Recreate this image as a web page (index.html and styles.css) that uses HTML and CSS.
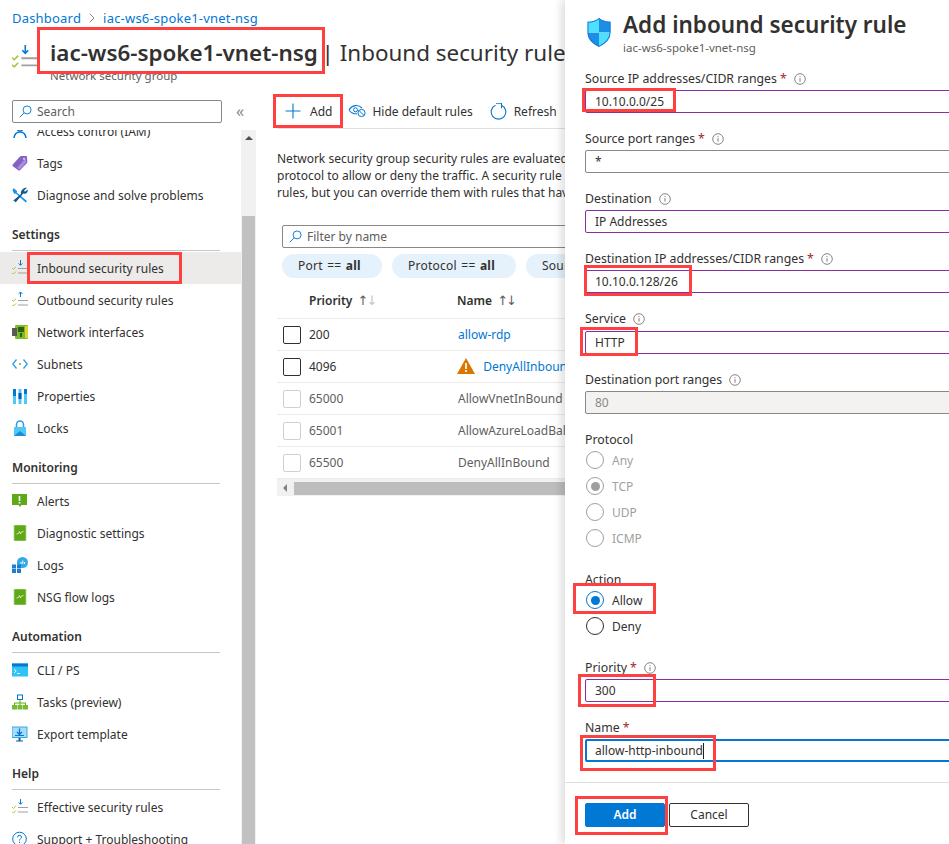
FILE: index.html
```html
<!DOCTYPE html>
<html lang="en">
<head>
    <meta charset="UTF-8">
    <meta name="viewport" content="width=device-width, initial-scale=1.0">
    <title>Add inbound security rule</title>
    <link rel="stylesheet" href="styles.css">
</head>
<body>
    <svg class="defs" width="0" height="0">
        <symbol id="rules-in" viewBox="0 0 16 16">
            <path d="M8.500 0v5M6.600 3.400l1.900 1.900 1.900-1.900" fill="none" stroke="#0078d4" stroke-width="1"/>
            <path d="M6 8.500h10M6 13h10" stroke="#a0a0a0" stroke-width="1.200"/>
            <path d="M0 8l1.400 1.400L4 6.800M0 12.600L1.400 14 4 11.400" fill="none" stroke="#a4c739" stroke-width="1"/>
        </symbol>
        <symbol id="rules-out" viewBox="0 0 16 16">
            <path d="M8.500 5V0M6.600 1.900L8.500 0l1.900 1.900" fill="none" stroke="#0078d4" stroke-width="1"/>
            <path d="M6 8.500h10M6 13h10" stroke="#a0a0a0" stroke-width="1.200"/>
            <path d="M0 8l1.400 1.400L4 6.800M0 12.600L1.400 14 4 11.400" fill="none" stroke="#a4c739" stroke-width="1"/>
        </symbol>
        <symbol id="flow" viewBox="0 0 16 16">
            <rect x="2" y="0" width="12" height="16" rx="1" fill="#5ea918"/>
            <rect x="2" y="0" width="12" height="16" rx="1" fill="none" stroke="#b4d98c" stroke-width=".8"/>
            <path d="M4.500 9l2-.5 1-2 1 2.500 1-2 2-.5" fill="none" stroke="#e8f5d8" stroke-width=".8"/>
        </symbol>
        <symbol id="info" viewBox="0 0 12 12">
            <circle cx="6" cy="6" r="5.300" fill="none" stroke="#7a7876" stroke-width=".9"/>
            <path d="M6 5.200v3.400M6 3.200v1" stroke="#7a7876" stroke-width="1"/>
        </symbol>
        <symbol id="search" viewBox="0 0 14 14">
            <circle cx="8.700" cy="5.300" r="4.300" fill="none" stroke="#0078d4" stroke-width="1"/>
            <path d="M5.600 8.400L.8 13.200" stroke="#0078d4" stroke-width="1"/>
        </symbol>
    </svg>

    <div class="page">
        <div class="blade">
            <div class="crumbs">
                <a href="#">Dashboard</a>
                <svg class="crumb-sep" width="6" height="10" viewBox="0 0 6 10"><path d="M.8.8L5 5 .8 9.200" fill="none" stroke="#8a8886"/></svg>
                <a href="#">iac-ws6-spoke1-vnet-nsg</a>
            </div>

            <div class="blade-head">
                <svg class="head-icon" width="25" height="25"><use href="#rules-in"/></svg>
                <div class="head-text">
                    <h1><b>iac-ws6-spoke1-vnet-nsg</b> | Inbound security rules</h1>
                    <p>Network security group</p>
                </div>
            </div>

            <div class="blade-body">
                <div class="side">
                    <div class="side-top">
                        <div class="search-box">
                            <svg width="13" height="13"><use href="#search"/></svg>
                            <span>Search</span>
                        </div>
                        <span class="collapse">«</span>
                    </div>
                    <div class="side-scroll">
                        <nav class="nav">
                            <a class="nav-item" href="#">
                                <svg width="16" height="16" viewBox="0 0 16 16"><circle cx="8" cy="5" r="3" fill="none" stroke="#0078d4" stroke-width="1.500"/><path d="M2 15c.5-4 3-6 6-6s5.500 2 6 6" fill="none" stroke="#0078d4" stroke-width="1.500"/></svg>
                                Access control (IAM)
                            </a>
                            <a class="nav-item" href="#">
                                <svg width="16" height="16" viewBox="0 0 16 16"><path d="M.8 9.500L8 1.500c.4-.4.800-.6 1.300-.6L14 1c.6 0 1 .4 1 1l.3 5c0 .5-.2.900-.5 1.200L8 15.200c-.5.500-1.200.5-1.700 0L.8 11.200c-.5-.5-.5-1.200 0-1.700z" fill="#8661c5"/><path d="M5 13l8.500-9.500.8 3.700L8 14.500z" fill="#a98be0"/><circle cx="12" cy="3.800" r="1" fill="#e8defa"/></svg>
                                Tags
                            </a>
                            <a class="nav-item" href="#">
                                <svg width="16" height="16" viewBox="0 0 16 16"><path d="M1.500 1l3.500 3-.3 1.500L15 14l-1.300 1.500L3.800 6.500 2.300 7 .5 3.500z" fill="#1b93eb"/><path d="M15 .8l-3 2.700 1 1.200 2.800-2.300c.3 2.800-1.800 5-4.600 4L3.800 15.300 1.300 13.600 9 7c-.8-3.500 2.800-7.200 6-6.200z" fill="#0f5c8e"/></svg>
                                Diagnose and solve problems
                            </a>

                            <h2 class="nav-head">Settings</h2>
                            <a class="nav-item active" href="#">
                                <svg width="16" height="16"><use href="#rules-in"/></svg>
                                Inbound security rules
                            </a>
                            <a class="nav-item" href="#">
                                <svg width="16" height="16"><use href="#rules-out"/></svg>
                                Outbound security rules
                            </a>
                            <a class="nav-item" href="#">
                                <svg width="16" height="16" viewBox="0 0 16 16"><rect x="3" y="1" width="13" height="14" rx="1" fill="#76bc2d"/><rect x="0" y="4" width="5" height="8" fill="#5a5a5a"/><rect x="6" y="3" width="6" height="5" fill="#2f5f12"/><rect x="8" y="9" width="2" height="4" fill="#2f5f12"/><rect x="13" y="2" width="3" height="12" fill="#e3d12c"/></svg>
                                Network interfaces
                            </a>
                            <a class="nav-item" href="#">
                                <svg width="16" height="16" viewBox="0 0 16 16"><path d="M4.500 3.500L.8 8l3.700 4.500M11.500 3.500L15.200 8l-3.700 4.500" fill="none" stroke="#2aa0f0" stroke-width="1.300"/><circle cx="8" cy="8" r="1.100" fill="#7fba00"/></svg>
                                Subnets
                            </a>
                            <a class="nav-item" href="#">
                                <svg width="16" height="16" viewBox="0 0 16 16"><rect x="1" y="1" width="3" height="15" fill="#50c8f8"/><rect x="1" y="1" width="3" height="7" fill="#0078d4"/><rect x="6.500" y="1" width="3" height="15" fill="#50c8f8"/><rect x="6.500" y="5" width="3" height="6" fill="#0b5ca8"/><rect x="12" y="1" width="3" height="15" fill="#50c8f8"/><rect x="12" y="1" width="3" height="5" fill="#0078d4"/></svg>
                                Properties
                            </a>
                            <a class="nav-item" href="#">
                                <svg width="16" height="16" viewBox="0 0 16 16"><path d="M4.500 8V4.500a3.500 3.500 0 017 0V8" fill="none" stroke="#2aa0e0" stroke-width="1.600"/><rect x="2" y="7" width="12" height="9" fill="#50c8f8"/><path d="M2 16l6-5 6 5z" fill="#1a8fd8"/></svg>
                                Locks
                            </a>

                            <h2 class="nav-head">Monitoring</h2>
                            <a class="nav-item" href="#">
                                <svg width="16" height="16" viewBox="0 0 16 16"><path d="M0 1h15v11H9.500L8 14 6.500 12H0z" fill="#5ea918"/><path d="M7.500 3v5M7.500 9v1.500" stroke="#fff" stroke-width="1.600"/></svg>
                                Alerts
                            </a>
                            <a class="nav-item" href="#">
                                <svg width="16" height="16"><use href="#flow"/></svg>
                                Diagnostic settings
                            </a>
                            <a class="nav-item" href="#">
                                <svg width="16" height="16" viewBox="0 0 16 16"><circle cx="10.500" cy="5.500" r="5.500" fill="#32a9e8"/><path d="M9 7V5M10.800 7V3.500M12.600 7V5" stroke="#fff"/><rect x="0" y="7.500" width="4" height="4" fill="#1a7fd0"/><rect x="5" y="7.500" width="4" height="4" fill="#1a7fd0"/><rect x="0" y="12" width="4" height="4" fill="#1a7fd0"/><rect x="5" y="12" width="4" height="4" fill="#1a7fd0"/></svg>
                                Logs
                            </a>
                            <a class="nav-item" href="#">
                                <svg width="16" height="16"><use href="#flow"/></svg>
                                NSG flow logs
                            </a>

                            <h2 class="nav-head">Automation</h2>
                            <a class="nav-item" href="#">
                                <svg width="16" height="16" viewBox="0 0 16 16"><rect x="0" y="1.500" width="16" height="13" fill="#32c3f5"/><rect x="0" y="1.500" width="16" height="3" fill="#0078d4"/><path d="M2 7l2.200 2L2 11M5 11.500h3" fill="none" stroke="#fff" stroke-width=".9"/></svg>
                                CLI / PS
                            </a>
                            <a class="nav-item" href="#">
                                <svg width="16" height="16" viewBox="0 0 16 16"><rect x="5.500" y="1" width="5" height="4.500" fill="#fff" stroke="#0078d4"/><path d="M8 5.500V12M2.500 12V9h11v3" fill="none" stroke="#5ea918"/><rect x="0" y="11" width="5" height="4.500" fill="#76bc2d"/><rect x="5.500" y="11" width="5" height="4.500" fill="#76bc2d"/><rect x="11" y="11" width="5" height="4.500" fill="#76bc2d"/></svg>
                                Tasks (preview)
                            </a>
                            <a class="nav-item" href="#">
                                <svg width="16" height="16" viewBox="0 0 16 16"><rect x="0" y="1" width="15" height="10.500" fill="#a8dcf8" stroke="#32a9e8"/><path d="M7.500 2.500v6M5 6l2.500 2.500L10 6" fill="none" stroke="#0078d4" stroke-width="1.300"/><path d="M3 9.500h9" stroke="#0078d4"/><path d="M6.500 12h2v2.500h2.500v1H4v-1h2.500z" fill="#0b5ca8"/></svg>
                                Export template
                            </a>

                            <h2 class="nav-head">Help</h2>
                            <a class="nav-item" href="#">
                                <svg width="16" height="16"><use href="#rules-in"/></svg>
                                Effective security rules
                            </a>
                            <a class="nav-item" href="#">
                                <svg width="16" height="16" viewBox="0 0 16 16"><circle cx="7.500" cy="8" r="6.800" fill="none" stroke="#0078d4"/><path d="M5.500 6.300a2 2 0 114 0c0 1.300-2 1.500-2 3.200M7.500 10.700v1.300" fill="none" stroke="#0078d4"/></svg>
                                Support + Troubleshooting
                            </a>
                        </nav>
                        <div class="side-bar">
                            <i class="arrow-up"></i>
                            <div class="side-thumb"></div>
                        </div>
                    </div>
                </div>

                <main class="main">
                    <div class="cmdbar">
                        <span class="cmd cmd-add">
                            <svg width="16" height="16" viewBox="0 0 16 16"><path d="M8 .5v15M.5 8h15" stroke="#0078d4" stroke-width="1.100"/></svg>
                            Add
                        </span>
                        <span class="cmd cmd-hide">
                            <svg width="18" height="14" viewBox="0 0 18 14"><path d="M1 6c3-5 9-6 13-2M1 6c2 3 5 4 8 4" fill="none" stroke="#0078d4" stroke-width="1.100"/><circle cx="7.500" cy="5.800" r="2" fill="none" stroke="#0078d4"/><circle cx="13.500" cy="9" r="3.600" fill="#fff" stroke="#0078d4"/><path d="M11 6.500l5 5" stroke="#0078d4"/></svg>
                            Hide default rules
                        </span>
                        <span class="cmd cmd-refresh">
                            <svg width="17" height="17" viewBox="0 0 17 17"><path d="M5.500 2.200a7.300 7.300 0 106 0" fill="none" stroke="#0078d4" stroke-width="1.100"/><path d="M6 .3h5.500v5" fill="none" stroke="#0078d4" stroke-width="1.100"/></svg>
                            Refresh
                        </span>
                    </div>

                    <p class="intro">Network security group security rules are evaluated by priority using the combination of source, source port, destination, destination port, and<br>protocol to allow or deny the traffic. A security rule can't have the same priority and direction as an existing rule. You can't delete default security<br>rules, but you can override them with rules that have higher priorities.</p>

                    <div class="filter-box">
                        <svg width="13" height="13"><use href="#search"/></svg>
                        <span>Filter by name</span>
                    </div>
                    <div class="pills">
                        <span class="pill pill-port">Port == <b>all</b></span>
                        <span class="pill pill-proto">Protocol == <b>all</b></span>
                        <span class="pill">Source == <b>all</b></span>
                    </div>

                    <table class="rules">
                        <thead>
                            <tr>
                                <th></th>
                                <th>Priority <span class="sort">↑<em>↓</em></span></th>
                                <th>Name <span class="sort">↑↓</span></th>
                            </tr>
                        </thead>
                        <tbody>
                            <tr>
                                <td><i class="check"></i></td>
                                <td>200</td>
                                <td><a href="#">allow-rdp</a></td>
                            </tr>
                            <tr>
                                <td><i class="check"></i></td>
                                <td>4096</td>
                                <td class="warn-cell">
                                    <svg width="18" height="16" viewBox="0 0 18 16"><path d="M9 0l9 16H0z" fill="#db7500"/><path d="M9 5v6M9 12v2" stroke="#fff" stroke-width="1.700"/></svg>
                                    <a href="#">DenyAllInbound-from-internet</a>
                                </td>
                            </tr>
                            <tr class="default">
                                <td><i class="check"></i></td>
                                <td>65000</td>
                                <td>AllowVnetInBound</td>
                            </tr>
                            <tr class="default">
                                <td><i class="check"></i></td>
                                <td>65001</td>
                                <td>AllowAzureLoadBalancerInBound</td>
                            </tr>
                            <tr class="default">
                                <td><i class="check"></i></td>
                                <td>65500</td>
                                <td>DenyAllInBound</td>
                            </tr>
                        </tbody>
                    </table>
                    <div class="table-bar">
                        <i class="arrow-left"></i>
                        <div class="table-thumb"></div>
                    </div>
                </main>
            </div>
        </div>

        <aside class="panel">
            <div class="panel-head">
                <svg width="24" height="29" viewBox="0 0 24 28" preserveAspectRatio="none">
                    <path d="M12 0c3 2.500 7 3.500 11.500 3.500V14H12z" fill="#1b8fe8"/>
                    <path d="M12 14H.5c0 6.500 5 11 11.500 14z" fill="#1b8fe8"/>
                    <path d="M12 14H.5V3.500C5 3.500 9 2.500 12 0z" fill="#50e0ff"/>
                    <path d="M12 14h11.500c0 6.500-5 11-11.500 14z" fill="#50e0ff"/>
                    <path d="M12 .6c3 2.400 7 3.400 11 3.400V14c0 6.200-4.800 10.500-11 13.400C5.800 24.500 1 20.200 1 14V4C5 4 9 3 12 .6z" fill="none" stroke="#1a7fd8" stroke-width="1"/>
                </svg>
                <div>
                    <h2>Add inbound security rule</h2>
                    <p>iac-ws6-spoke1-vnet-nsg</p>
                </div>
            </div>

            <div class="field">
                <label>Source IP addresses/CIDR ranges <em>*</em><svg class="info" width="12" height="12"><use href="#info"/></svg></label>
                <div class="input changed">10.10.0.0/25</div>
            </div>
            <div class="field">
                <label>Source port ranges <em>*</em><svg class="info" width="12" height="12"><use href="#info"/></svg></label>
                <div class="input">*</div>
            </div>
            <div class="field">
                <label>Destination<svg class="info" width="12" height="12"><use href="#info"/></svg></label>
                <div class="input changed">IP Addresses</div>
            </div>
            <div class="field">
                <label>Destination IP addresses/CIDR ranges <em>*</em><svg class="info" width="12" height="12"><use href="#info"/></svg></label>
                <div class="input changed">10.10.0.128/26</div>
            </div>
            <div class="field field-service">
                <label>Service<svg class="info" width="12" height="12"><use href="#info"/></svg></label>
                <div class="input changed">HTTP</div>
            </div>
            <div class="field">
                <label>Destination port ranges<svg class="info" width="12" height="12"><use href="#info"/></svg></label>
                <div class="input disabled">80</div>
            </div>

            <div class="group-label">Protocol</div>
            <div class="radio disabled"><i></i>Any</div>
            <div class="radio disabled on"><i></i>TCP</div>
            <div class="radio disabled"><i></i>UDP</div>
            <div class="radio disabled"><i></i>ICMP</div>

            <div class="group-label group-action">Action</div>
            <div class="radio on"><i></i>Allow</div>
            <div class="radio"><i></i>Deny</div>

            <div class="field field-priority">
                <label>Priority <em>*</em><svg class="info" width="12" height="12"><use href="#info"/></svg></label>
                <div class="input changed">300</div>
            </div>
            <div class="field">
                <label>Name <em>*</em></label>
                <div class="input focused"><span class="caret">allow-http-inbound</span></div>
            </div>

            <div class="panel-foot">
                <button class="btn btn-primary">Add</button>
                <button class="btn">Cancel</button>
            </div>
        </aside>
    </div>

    <!-- red callouts drawn over the screenshot -->
    <div class="mark mark-title"></div>
    <div class="mark mark-add"></div>
    <div class="mark mark-inbound"></div>
    <div class="mark mark-source"></div>
    <div class="mark mark-dest"></div>
    <div class="mark mark-service"></div>
    <div class="mark mark-allow"></div>
    <div class="mark mark-priority"></div>
    <div class="mark mark-name"></div>
    <div class="mark mark-submit"></div>
</body>
</html>
```

FILE: styles.css
```css
* {
    box-sizing: border-box;
}

html, body {
    margin: 0;
    height: 844px;
    overflow: hidden;
}

body {
    position: relative;
    background: #fff;
    color: #323130;
    font-family: "Noto Sans", "Open Sans", sans-serif;
    font-size: 12px;
}

a {
    color: #0078d4;
    text-decoration: none;
}

.defs {
    position: absolute;
}

.page {
    display: flex;
    height: 844px;
}

.blade {
    width: 565px;
    flex: none;
    overflow: hidden;
}

/* breadcrumb + title */
.crumbs {
    display: flex;
    align-items: center;
    gap: 8px;
    height: 20px;
    margin-top: 8px;
    padding-left: 12px;
    font-size: 13px;
    letter-spacing: .2px;
    line-height: 20px;
}

.blade-head {
    display: flex;
    height: 66px;
    padding: 9px 0 0 12px;
    white-space: nowrap;
}

.head-icon {
    flex: none;
    margin: 8px 13px 0 0;
}

.head-text h1 {
    margin: 0;
    font-size: 22.400px;
    font-weight: 400;
    line-height: 32px;
}

.head-text h1 b {
    margin-right: -2px;
    font-weight: 600;
}

.head-text p {
    margin: 0;
    color: #605e5c;
    font-size: 11.500px;
    line-height: 14px;
}

.blade-body {
    display: flex;
    height: 750px;
}

/* left menu */
.side {
    width: 256px;
    flex: none;
    display: flex;
    flex-direction: column;
}

.side-top {
    display: flex;
    align-items: center;
    height: 36px;
    padding: 0 0 2px 12px;
}

.search-box, .filter-box {
    display: flex;
    align-items: center;
    gap: 5px;
    height: 23px;
    padding-left: 6px;
    border: 1px solid #8a8886;
    border-radius: 2px;
    color: #605e5c;
}

.search-box {
    width: 210px;
}

.collapse {
    margin-left: 14px;
    color: #8a8886;
    font-size: 16px;
    line-height: 20px;
}

.side-scroll {
    display: flex;
    height: 714px;
}

.nav {
    width: 241px;
    flex: none;
    overflow: hidden;
}

.nav-item {
    display: flex;
    align-items: center;
    gap: 9px;
    height: 32px;
    padding-left: 12px;
    color: #323130;
    white-space: nowrap;
}

.nav-item:first-child {
    margin-top: -15px;
}

.nav-item svg {
    flex: none;
}

.nav-item.active {
    background: #edebe9;
}

.nav-head {
    width: 208px;
    height: 40px;
    margin: 0 0 1px 12px;
    padding: 13px 0 6px;
    border-bottom: 1px solid #c8c6c4;
    color: #323130;
    font-size: 12px;
    font-weight: 600;
    line-height: 22px;
}

.side-bar {
    width: 15px;
    flex: none;
    background: #f1f1f1;
}

.arrow-up {
    display: block;
    width: 0;
    margin: 6px auto 0;
    border: 4px solid transparent;
    border-top: 0;
    border-bottom: 4px solid #505050;
}

.side-thumb {
    height: 628px;
    margin: 76px 1px 0;
    background: #c1c1c1;
}

/* content area */
.main {
    flex: 1;
    min-width: 0;
    padding-left: 21px;
    overflow: hidden;
}

.cmdbar {
    display: flex;
    align-items: center;
    height: 35px;
    border-bottom: 1px solid #e1dfdd;
    white-space: nowrap;
}

.cmd {
    display: flex;
    align-items: center;
}

.cmd-add {
    gap: 9px;
    margin-left: 8px;
}

.cmd-hide {
    gap: 6px;
    margin-left: 16px;
}

.cmd-refresh {
    gap: 7px;
    margin-left: 17px;
}

.intro {
    margin: 21px 0 24px;
    font-size: 12px;
    line-height: 17px;
    white-space: nowrap;
}

.filter-box {
    width: 320px;
    margin-left: 5px;
}

.pills {
    display: flex;
    gap: 10px;
    width: 400px;
    margin: 6px 0 0 5px;
}

.pill {
    height: 24px;
    padding: 0 16px;
    border-radius: 12px;
    background: #e5f1fb;
    letter-spacing: .25px;
    line-height: 23px;
    word-spacing: 1px;
    white-space: nowrap;
}

.pill-port {
    width: 100px;
    flex: none;
}

.pill-proto {
    width: 124px;
    flex: none;
}

.rules {
    width: 600px;
    margin-top: 4px;
    border-collapse: collapse;
    table-layout: fixed;
    white-space: nowrap;
}

.rules th {
    height: 36px;
    padding: 1px 0 0;
    border-bottom: 1px solid #edebe9;
    font-weight: 600;
    text-align: left;
}

.rules th:first-child, .rules td:first-child {
    width: 32px;
}

.rules th:nth-child(2), .rules td:nth-child(2) {
    width: 148px;
}

.rules td {
    height: 32px;
    padding: 1px 0 0;
    border-bottom: 1px solid #edebe9;
}

.rules td:nth-child(3) {
    padding-left: 1px;
}

.rules td.warn-cell {
    padding-left: 0;
}

.rules .default {
    color: #605e5c;
}

.sort {
    margin-left: 2px;
    color: #605e5c;
    font-family: "DejaVu Sans", sans-serif;
    font-size: 13px;
    font-weight: 400;
    letter-spacing: -2px;
}

.sort em {
    color: #c8c6c4;
    font-style: normal;
}

.warn-cell svg {
    margin-right: 5px;
    vertical-align: -3px;
}

.check {
    display: block;
    width: 18px;
    height: 18px;
    margin-left: 6px;
    border: 1px solid #323130;
    border-radius: 2px;
    background: #fff;
}

.default .check {
    border-color: #d2d0ce;
}

.table-bar {
    position: relative;
    height: 17px;
    background: #f1f1f1;
}

.arrow-left {
    position: absolute;
    top: 5px;
    left: 6px;
    border: 4px solid transparent;
    border-left: 0;
    border-right: 4px solid #808080;
}

.table-thumb {
    position: relative;
    top: 3px;
    height: 13px;
    margin-left: 17px;
    background: #bdbdbd;
}

/* right panel */
.panel {
    position: relative;
    width: 384px;
    flex: none;
    padding-left: 20px;
    background: #fff;
    box-shadow: -4px 0 8px rgba(0, 0, 0, .13);
    overflow: hidden;
}

.panel-head {
    display: flex;
    align-items: flex-start;
    gap: 12px;
    height: 68px;
    padding: 18px 0 0 2px;
    white-space: nowrap;
}

.panel-head svg {
    flex: none;
}

.panel-head > div {
    margin-top: -9px;
}

.panel-head h2 {
    margin: 0;
    font-size: 22.500px;
    font-weight: 600;
    line-height: 32px;
}

.panel-head p {
    margin: 0;
    color: #605e5c;
    font-size: 11.500px;
    line-height: 14px;
}

.field {
    margin-bottom: 15px;
}

.field label {
    display: flex;
    align-items: center;
    height: 22px;
    padding-bottom: 1px;
    font-size: 12.300px;
    line-height: 20px;
    white-space: nowrap;
}

.field label em {
    margin-left: 3px;
    color: #a4262c;
    font-style: normal;
}

.info {
    flex: none;
    margin-left: 7px;
}

.field-service label {
    height: 23px;
    padding-bottom: 2px;
}

.input {
    width: 400px;
    height: 23px;
    padding-left: 9px;
    border: 1px solid #8a8886;
    border-radius: 2px;
    line-height: 21px;
    white-space: nowrap;
}

.input.changed {
    border-color: #8a2da5;
}

.input.disabled {
    background: #f3f2f1;
    color: #8a8886;
}

.input.focused {
    border: 2px solid #0078d4;
    padding-left: 8px;
    line-height: 19px;
}

.caret {
    display: inline-block;
    border-right: 1px solid #201f1e;
    line-height: 16px;
}

.group-label {
    height: 18px;
    font-size: 12.300px;
    line-height: 21px;
}

.group-action {
    margin-top: 18px;
}

.radio {
    display: flex;
    align-items: center;
    gap: 8px;
    height: 26px;
    padding-left: 1px;
}

.radio i {
    display: flex;
    align-items: center;
    justify-content: center;
    width: 18px;
    height: 18px;
    border: 1px solid #323130;
    border-radius: 50%;
}

.radio.on i {
    border-color: #0078d4;
}

.radio.on i::after {
    content: "";
    width: 9px;
    height: 9px;
    border-radius: 50%;
    background: #0078d4;
}

.radio.disabled {
    color: #a19f9d;
}

.radio.disabled i {
    border-color: #a19f9d;
}

.radio.disabled.on i::after {
    background: #a19f9d;
}

.field-priority {
    margin-top: 18px;
}

.panel-foot {
    display: flex;
    gap: 4px;
    margin: 20px 0 0 -20px;
    padding: 20px 0 0 20px;
    border-top: 1px solid #e1dfdd;
}

.btn {
    width: 80px;
    height: 24px;
    padding: 0 0 2px;
    border: 1px solid #323130;
    border-radius: 2px;
    background: #fff;
    color: #323130;
    font: inherit;
}

.btn-primary {
    border-color: #0078d4;
    background: #0078d4;
    color: #fff;
    font-weight: 600;
}

/* callouts */
.mark {
    position: absolute;
    border: 3px solid #ff4040;
}

.mark-title {
    left: 37px;
    top: 27px;
    width: 288px;
    height: 47px;
}

.mark-add {
    left: 273px;
    top: 94px;
    width: 70px;
    height: 34px;
}

.mark-inbound {
    left: 27px;
    top: 252px;
    width: 155px;
    height: 32px;
}

.mark-source {
    left: 582px;
    top: 88px;
    width: 94px;
    height: 24px;
}

.mark-dest {
    left: 584px;
    top: 265px;
    width: 108px;
    height: 31px;
}

.mark-service {
    left: 580px;
    top: 327px;
    width: 58px;
    height: 29px;
}

.mark-allow {
    left: 573px;
    top: 583px;
    width: 83px;
    height: 31px;
}

.mark-priority {
    left: 578px;
    top: 674px;
    width: 78px;
    height: 33px;
}

.mark-name {
    left: 580px;
    top: 735px;
    width: 136px;
    height: 36px;
}

.mark-submit {
    left: 575px;
    top: 796px;
    width: 93px;
    height: 39px;
}
```
